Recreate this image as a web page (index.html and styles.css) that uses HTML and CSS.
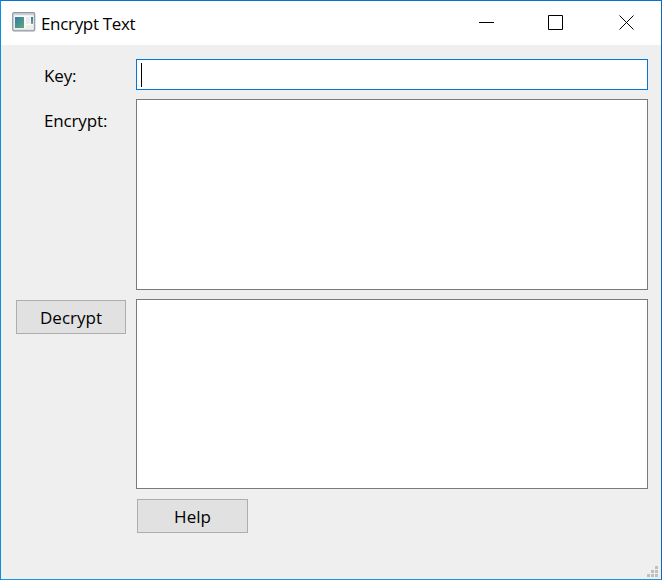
FILE: index.html
```html
<!DOCTYPE html>
<html lang="en">
<head>
<meta charset="utf-8">
<title>Encrypt Text</title>
<link rel="stylesheet" href="styles.css">
</head>
<body>
<div class="window">
  <header class="titlebar">
    <svg class="app-icon" width="24" height="20" viewBox="0 0 24 20">
      <defs>
        <linearGradient id="pane" x1="0" y1="0" x2="1" y2="1"><stop offset="0" stop-color="#3b78a8"/><stop offset="1" stop-color="#57ad76"/></linearGradient>
        <linearGradient id="strip" x1="0" y1="0" x2="0" y2="1"><stop offset="0" stop-color="#3972a5"/><stop offset="1" stop-color="#63ae86"/></linearGradient>
      </defs>
      <rect x=".7" y=".7" width="22" height="18.2" rx="1.3" fill="#e1e4e7" stroke="#92979d" stroke-width="1.2"/>
      <path d="M1.5 2h20.5" stroke="#b7bdc3"/>
      <rect x="2.500" y="3.500" width="18.500" height="13" fill="#fafafa"/>
      <rect x="3" y="5" width="9" height="11" fill="url(#pane)"/>
      <rect x="14" y="5" width="4" height="7" fill="#ececec"/>
      <rect x="14" y="13" width="7" height="3" fill="#eeeeee"/>
      <rect x="19" y="5" width="2" height="7" fill="url(#strip)"/>
    </svg>
    <span class="title">Encrypt Text</span>
    <svg class="controls" width="156" height="16" viewBox="0 0 156 16" fill="none" stroke="#000">
      <path d="M0 7.500h15M69.500.5h14v14h-14z"/>
      <path d="M140.500.5l14 14M154.500.5l-14 14"/>
    </svg>
  </header>
  <main class="form">
    <label class="label key-label">Key:</label>
    <div class="field focused"><span class="caret"></span></div>
    <label class="label encrypt-label">Encrypt:</label>
    <div class="field"></div>
    <button class="button decrypt">Decrypt</button>
    <div class="field"></div>
    <button class="button help">Help</button>
  </main>
  <svg class="grip" width="11" height="11" viewBox="0 0 11 11" fill="#bfbfbf">
    <path d="M8 0h3v3H8zM4 4h3v3H4zM8 4h3v3H8zM0 8h3v3H0zM4 8h3v3H4zM8 8h3v3H8z"/>
  </svg>
</div>
</body>
</html>
```
FILE: styles.css
```css
* { box-sizing: border-box; }
body {
  margin: 0;
  font-family: "Open Sans", "Noto Sans", sans-serif;
  font-size: 17px;
  line-height: 24px;
  color: #000;
}
.window {
  position: relative;
  width: 662px;
  height: 580px;
  border: 1px solid;
  border-color: #0a72cc #1663bb #1f90dd #0a8fe0;
  background: #efefef;
  overflow: hidden;
}
.titlebar {
  display: flex;
  height: 44px;
  padding-left: 11px;
  background: #fff;
}
.app-icon { margin-top: 11px; }
.title {
  margin: 11px 0 0 5px;
  letter-spacing: -0.33px;
  white-space: nowrap;
}
.controls { margin: 14px 26px 0 auto; }
.form {
  display: grid;
  grid-template-columns: 110px 512px;
  grid-template-rows: 31px 191px 190px 34px;
  column-gap: 10px;
  padding: 14px 0 0 15px;
  row-gap: 9px;
}
.label {
  padding-left: 28px;
  letter-spacing: -0.15px;
}
.key-label { padding-top: 5px; }
.encrypt-label { padding-top: 10px; }
.field {
  padding: 3px 4px;
  border: 1px solid #7a7a7a;
  background: #fff;
}
.focused { border-color: #0078d7; }
.caret {
  display: block;
  width: 1px;
  height: 24px;
  background: #000;
}
.button {
  height: 34px;
  padding: 2px 0 0;
  border: 1px solid #adadad;
  background: #e1e1e1;
  font: inherit;
  letter-spacing: 0;
  color: #000;
}
.decrypt { margin-top: 1px; }
.help {
  grid-column: 2;
  width: 111px;
  margin: 1px 0 0 1px;
}
.grip {
  position: absolute;
  right: 3px;
  bottom: 2px;
}
```
